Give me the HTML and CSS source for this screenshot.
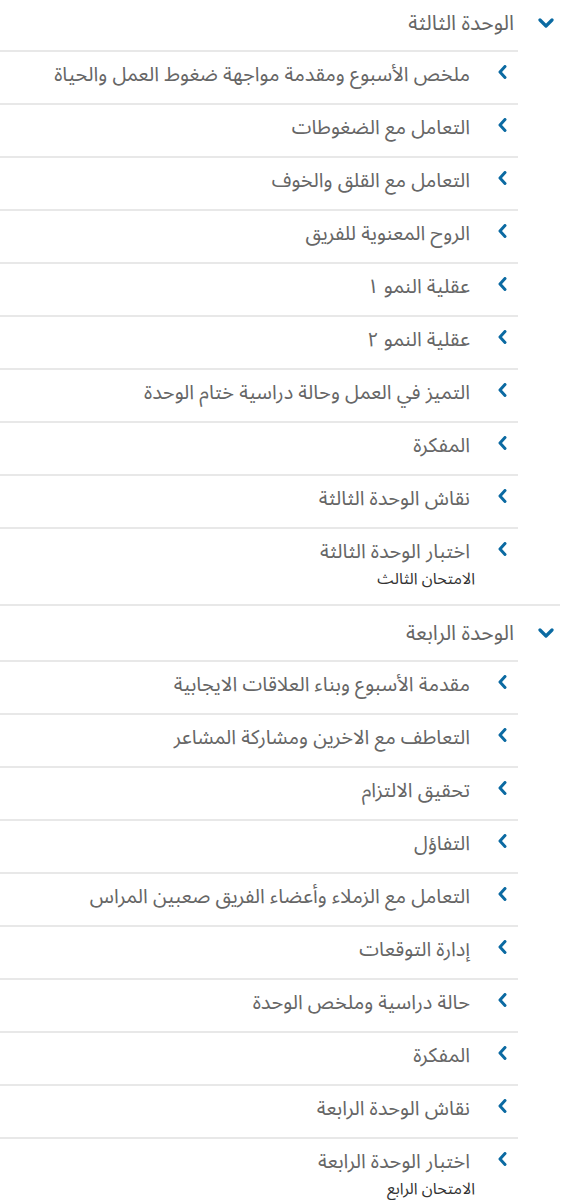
FILE: index.html
```html
<!DOCTYPE html>
<html lang="ar" dir="rtl">
<head>
<meta charset="utf-8">
<link rel="stylesheet" href="styles.css">
</head>
<body>
<div class="page">
  <section class="unit">
    <div class="unit-head">
      <svg class="chev-down" viewBox="0 0 16 10" width="16" height="10"><path d="M2 2 L8 8 L14 2" /></svg>
      <span class="unit-title">الوحدة الثالثة</span>
    </div>
    <ul class="items">
      <li class="item"><svg class="chev" viewBox="0 0 9 14" width="9" height="14"><path d="M7 1.5 L2 7 L7 12.5" /></svg><div class="txt"><span class="title">ملخص الأسبوع ومقدمة مواجهة ضغوط العمل والحياة</span></div></li>
      <li class="item"><svg class="chev" viewBox="0 0 9 14" width="9" height="14"><path d="M7 1.5 L2 7 L7 12.5" /></svg><div class="txt"><span class="title">التعامل مع الضغوطات</span></div></li>
      <li class="item"><svg class="chev" viewBox="0 0 9 14" width="9" height="14"><path d="M7 1.5 L2 7 L7 12.5" /></svg><div class="txt"><span class="title">التعامل مع القلق والخوف</span></div></li>
      <li class="item"><svg class="chev" viewBox="0 0 9 14" width="9" height="14"><path d="M7 1.5 L2 7 L7 12.5" /></svg><div class="txt"><span class="title">الروح المعنوية للفريق</span></div></li>
      <li class="item"><svg class="chev" viewBox="0 0 9 14" width="9" height="14"><path d="M7 1.5 L2 7 L7 12.5" /></svg><div class="txt"><span class="title">عقلية النمو ١</span></div></li>
      <li class="item"><svg class="chev" viewBox="0 0 9 14" width="9" height="14"><path d="M7 1.5 L2 7 L7 12.5" /></svg><div class="txt"><span class="title">عقلية النمو ٢</span></div></li>
      <li class="item"><svg class="chev" viewBox="0 0 9 14" width="9" height="14"><path d="M7 1.5 L2 7 L7 12.5" /></svg><div class="txt"><span class="title">التميز في العمل وحالة دراسية ختام الوحدة</span></div></li>
      <li class="item"><svg class="chev" viewBox="0 0 9 14" width="9" height="14"><path d="M7 1.5 L2 7 L7 12.5" /></svg><div class="txt"><span class="title">المفكرة</span></div></li>
      <li class="item"><svg class="chev" viewBox="0 0 9 14" width="9" height="14"><path d="M7 1.5 L2 7 L7 12.5" /></svg><div class="txt"><span class="title">نقاش الوحدة الثالثة</span></div></li>
      <li class="item last"><svg class="chev" viewBox="0 0 9 14" width="9" height="14"><path d="M7 1.5 L2 7 L7 12.5" /></svg><div class="txt"><span class="title">اختبار الوحدة الثالثة</span><span class="sub">الامتحان الثالث</span></div></li>
    </ul>
  </section>
  <section class="unit">
    <div class="unit-head">
      <svg class="chev-down" viewBox="0 0 16 10" width="16" height="10"><path d="M2 2 L8 8 L14 2" /></svg>
      <span class="unit-title">الوحدة الرابعة</span>
    </div>
    <ul class="items">
      <li class="item"><svg class="chev" viewBox="0 0 9 14" width="9" height="14"><path d="M7 1.5 L2 7 L7 12.5" /></svg><div class="txt"><span class="title">مقدمة الأسبوع وبناء العلاقات الايجابية</span></div></li>
      <li class="item"><svg class="chev" viewBox="0 0 9 14" width="9" height="14"><path d="M7 1.5 L2 7 L7 12.5" /></svg><div class="txt"><span class="title">التعاطف مع الاخرين ومشاركة المشاعر</span></div></li>
      <li class="item"><svg class="chev" viewBox="0 0 9 14" width="9" height="14"><path d="M7 1.5 L2 7 L7 12.5" /></svg><div class="txt"><span class="title">تحقيق الالتزام</span></div></li>
      <li class="item"><svg class="chev" viewBox="0 0 9 14" width="9" height="14"><path d="M7 1.5 L2 7 L7 12.5" /></svg><div class="txt"><span class="title">التفاؤل</span></div></li>
      <li class="item"><svg class="chev" viewBox="0 0 9 14" width="9" height="14"><path d="M7 1.5 L2 7 L7 12.5" /></svg><div class="txt"><span class="title">التعامل مع الزملاء وأعضاء الفريق صعبين المراس</span></div></li>
      <li class="item"><svg class="chev" viewBox="0 0 9 14" width="9" height="14"><path d="M7 1.5 L2 7 L7 12.5" /></svg><div class="txt"><span class="title">إدارة التوقعات</span></div></li>
      <li class="item"><svg class="chev" viewBox="0 0 9 14" width="9" height="14"><path d="M7 1.5 L2 7 L7 12.5" /></svg><div class="txt"><span class="title">حالة دراسية وملخص الوحدة</span></div></li>
      <li class="item"><svg class="chev" viewBox="0 0 9 14" width="9" height="14"><path d="M7 1.5 L2 7 L7 12.5" /></svg><div class="txt"><span class="title">المفكرة</span></div></li>
      <li class="item"><svg class="chev" viewBox="0 0 9 14" width="9" height="14"><path d="M7 1.5 L2 7 L7 12.5" /></svg><div class="txt"><span class="title">نقاش الوحدة الرابعة</span></div></li>
      <li class="item last"><svg class="chev" viewBox="0 0 9 14" width="9" height="14"><path d="M7 1.5 L2 7 L7 12.5" /></svg><div class="txt"><span class="title">اختبار الوحدة الرابعة</span><span class="sub">الامتحان الرابع</span></div></li>
    </ul>
  </section>
</div>
</body>
</html>
```
FILE: styles.css
```css
html, body {
  margin: 0;
  padding: 0;
  background: #fff;
}
body {
  font-family: "Noto Sans Arabic", "Noto Kufi Arabic", "DejaVu Sans", sans-serif;
  color: #666;
}
.page {
  width: 560px;
  margin-top: -4px;
  margin-left: 0;
  margin-right: auto;
}
.unit {
  border-bottom: 2px solid #e8e8e8;
}
.unit-head {
  height: 54px;
  display: flex;
  align-items: center;
  gap: 24px;
  padding-right: 6px;
  box-sizing: border-box;
}
.unit-title {
  font-size: 21px;
  line-height: 24px;
  color: #666;
}
.chev-down {
  flex: none;
  fill: none;
  stroke: #0b6aa2;
  stroke-width: 3.2;
  stroke-linecap: round;
  stroke-linejoin: round;
}
.items {
  list-style: none;
  margin: 0 42px 0 0;
  padding: 0;
}
.item {
  display: flex;
  align-items: flex-start;
  gap: 28px;
  padding: 11px 11px 16px 0;
  border-top: 2px solid #e8e8e8;
}
.chev {
  flex: none;
  margin-top: 2px;
  fill: none;
  stroke: #0b6aa2;
  stroke-width: 3;
  stroke-linecap: round;
  stroke-linejoin: round;
}
.txt {
  display: flex;
  flex-direction: column;
}
.title {
  font-size: 20px;
  line-height: 24px;
  color: #666;
}
.sub {
  font-size: 16px;
  line-height: 22px;
  margin-top: 4px;
  margin-bottom: -2px;
  color: #333;
  margin-right: -5px;
}
```
